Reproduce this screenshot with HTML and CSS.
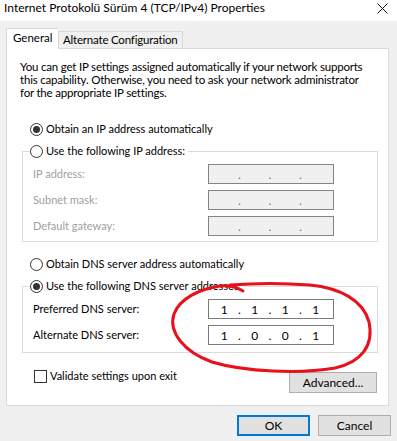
FILE: index.html
```html
<!DOCTYPE html>
<html lang="en">
<head>
  <meta charset="UTF-8" />
  <title>Internet Protokolü Sürüm 4 (TCP/IPv4) Properties</title>
  <link rel="stylesheet" href="styles.css">
</head>
<body>
  <div class="window">
    <div class="titlebar">
      <span class="title">Internet Protokolü Sürüm 4 (TCP/IPv4) Properties</span>
      <svg class="close" width="11" height="11" viewBox="0 0 11 11">
        <path d="M0.5 0.5 L10.5 10.5 M10.5 0.5 L0.5 10.5" stroke="#111" stroke-width="1" fill="none" />
      </svg>
    </div>

    <div class="tabs">
      <div class="tab active">General</div>
      <div class="tab">Alternate Configuration</div>
    </div>

    <div class="panel">
      <p class="intro">You can get IP settings assigned automatically if your network supports<br>this capability. Otherwise, you need to ask your network administrator<br>for the appropriate IP settings.</p>

      <label class="radio-row first">
        <span class="radio checked"></span>
        <span>Obtain an IP address automatically</span>
      </label>

      <div class="group">
        <label class="radio-row legend">
          <span class="radio"></span>
          <span>Use the following IP address:</span>
        </label>
        <div class="field-row disabled">
          <span class="field-label">IP address:</span>
          <div class="ip-box"><span class="oct"></span><span class="dot">.</span><span class="oct"></span><span class="dot">.</span><span class="oct"></span><span class="dot">.</span><span class="oct"></span></div>
        </div>
        <div class="field-row disabled">
          <span class="field-label">Subnet mask:</span>
          <div class="ip-box"><span class="oct"></span><span class="dot">.</span><span class="oct"></span><span class="dot">.</span><span class="oct"></span><span class="dot">.</span><span class="oct"></span></div>
        </div>
        <div class="field-row disabled">
          <span class="field-label">Default gateway:</span>
          <div class="ip-box"><span class="oct"></span><span class="dot">.</span><span class="oct"></span><span class="dot">.</span><span class="oct"></span><span class="dot">.</span><span class="oct"></span></div>
        </div>
      </div>

      <label class="radio-row dns-auto">
        <span class="radio"></span>
        <span>Obtain DNS server address automatically</span>
      </label>

      <div class="group dns-group">
        <label class="radio-row legend">
          <span class="radio checked"></span>
          <span>Use the following DNS server addresses:</span>
        </label>
        <div class="field-row">
          <span class="field-label">Preferred DNS server:</span>
          <div class="ip-box"><span class="oct">1</span><span class="dot">.</span><span class="oct">1</span><span class="dot">.</span><span class="oct">1</span><span class="dot">.</span><span class="oct">1</span></div>
        </div>
        <div class="field-row">
          <span class="field-label">Alternate DNS server:</span>
          <div class="ip-box"><span class="oct">1</span><span class="dot">.</span><span class="oct">0</span><span class="dot">.</span><span class="oct">0</span><span class="dot">.</span><span class="oct">1</span></div>
        </div>
      </div>

      <div class="bottom-row">
        <label class="check-row">
          <span class="checkbox"></span>
          <span>Validate settings upon exit</span>
        </label>
        <button class="btn advanced">Advanced...</button>
      </div>
    </div>

    <div class="footer">
      <button class="btn default">OK</button>
      <button class="btn">Cancel</button>
    </div>

    <svg class="scribble" width="397" height="441" viewBox="0 0 397 441">
      <path d="M243 291 C236 287 228 285 220 286 C200 289 180 298 174 314 C168 332 184 352 212 362 C245 372 300 374 335 368 C362 362 374 345 369 322 C363 300 340 288 310 285 C285 283 255 283 230 285"
            stroke="#e8101a" stroke-width="3" fill="none" stroke-linecap="round" />
    </svg>
  </div>
</body>
</html>
```

FILE: styles.css
```css
* {
  margin: 0;
  padding: 0;
  box-sizing: border-box;
}

body {
  font-family: 'Lato', 'Noto Sans', sans-serif;
  font-size: 11px;
  color: #000;
  background: #f0f0f0;
}

.window {
  position: relative;
  width: 397px;
  height: 441px;
  background: #f0f0f0;
  overflow: hidden;
}

.titlebar {
  height: 21px;
  background: #fff;
  display: flex;
  justify-content: space-between;
  align-items: flex-start;
  padding: 0 9px 0 4px;
}

.title {
  font-size: 12px;
  line-height: 16px;
}

.close {
  margin-top: 3px;
}

.tabs {
  display: flex;
  align-items: flex-end;
  margin: 7px 0 0 6px;
  height: 20px;
  font-size: 11.5px;
}

.tab {
  height: 17px;
  padding: 0 4px;
  line-height: 16px;
  background: #f0f0f0;
  border: 1px solid #d9d9d9;
  border-bottom: none;
  letter-spacing: -0.2px;
}

.tab.active {
  height: 21px;
  width: 52px;
  padding: 0 6px;
  line-height: 18px;
  background: #fff;
  border-right: none;
  position: relative;
  z-index: 1;
  margin-bottom: -1px;
  letter-spacing: 0;
}

.panel {
  margin: 0 8px 0 6px;
  height: 358px;
  background: #fff;
  border: 1px solid #d9d9d9;
  padding: 11px 12px 0 13px;
}

.intro {
  font-size: 11.5px;
  line-height: 13px;
  letter-spacing: -0.2px;
  white-space: nowrap;
}

.radio-row {
  display: flex;
  align-items: center;
  gap: 3px;
  height: 14px;
  line-height: 14px;
}

.radio-row.first {
  margin: 23px 0 0 10px;
}

.radio {
  width: 13px;
  height: 13px;
  border: 1px solid #333;
  border-radius: 50%;
  background: #fff;
  display: flex;
  align-items: center;
  justify-content: center;
}

.radio.checked::after {
  content: '';
  width: 7px;
  height: 7px;
  border-radius: 50%;
  background: #333;
}

.group {
  margin: 15px 0 0 2px;
  border: 1px solid #dcdcdc;
  height: 91px;
  width: 356px;
  padding: 12px 0 0 10px;
  position: relative;
}

.legend {
  position: absolute;
  top: -8px;
  left: 7px;
  background: #fff;
  padding-right: 3px;
}

.field-row {
  display: flex;
  align-items: center;
  justify-content: space-between;
  height: 20px;
  margin-bottom: 6px;
  padding-right: 43px;
}

.field-label {
  line-height: 20px;
}

.disabled .field-label {
  color: #a0a0a0;
}

.ip-box {
  width: 126px;
  height: 20px;
  border: 1px solid #7a7a7a;
  background: #fff;
  display: flex;
  align-items: center;
  padding: 0 4px 0 2px;
  font-size: 12px;
}

.disabled .ip-box {
  background: #f0f0f0;
  border-color: #838383;
}

.oct {
  flex: 1;
  text-align: center;
}

.dot {
  width: 4px;
  text-align: center;
}

.disabled .dot {
  color: #6d6d6d;
}

.dns-auto {
  margin: 15px 0 0 10px;
}

.dns-group {
  margin-top: 15px;
  height: 67px;
}

.bottom-row {
  display: flex;
  justify-content: space-between;
  align-items: flex-start;
  margin-top: 16px;
  width: 357px;
}

.check-row {
  display: flex;
  align-items: center;
  gap: 3px;
  margin-left: 14px;
  line-height: 14px;
}

.checkbox {
  width: 13px;
  height: 13px;
  border: 1px solid #333;
  background: #fff;
}

.btn {
  font-family: inherit;
  font-size: 12px;
  color: #000;
  background: #e1e1e1;
  border: 1px solid #adadad;
  width: 73px;
  height: 21px;
  line-height: 18px;
}

.btn.advanced {
  width: 88px;
  margin-top: 3px;
}

.btn.default {
  border: 2px solid #0078d7;
}

.footer {
  display: flex;
  justify-content: flex-end;
  gap: 8px;
  padding: 9px 6px 0 0;
}

.scribble {
  position: absolute;
  top: 0;
  left: 0;
  pointer-events: none;
}
```
